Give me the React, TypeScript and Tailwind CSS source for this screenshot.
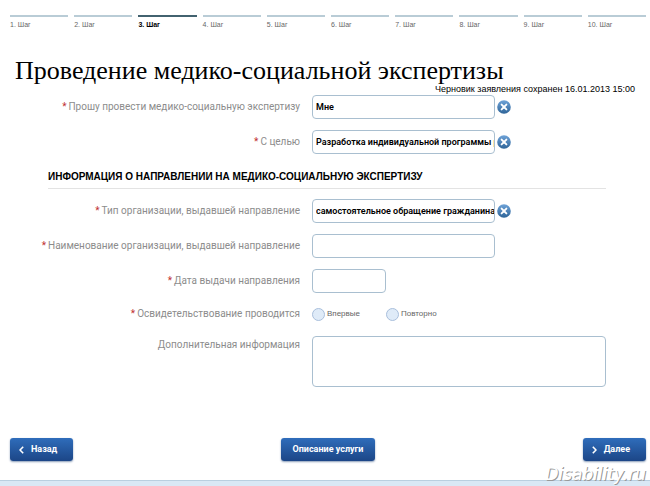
import React, { useState } from 'react';

const STEPS = [1, 2, 3, 4, 5, 6, 7, 8, 9, 10];
const CURRENT_STEP = 3;

const inputClass =
    'h-6 rounded border border-[#a9bfd0] bg-white pl-[3px] font-[Roboto,sans-serif] font-semibold text-[9px] text-black outline-none focus:border-[#4f86b8]';
const buttonClass =
    'flex h-[23px] items-center rounded-[3px] bg-linear-to-b from-[#2f6dbb] to-[#1c4687] font-[Roboto,sans-serif] text-[9px] font-bold text-white shadow-[0_1px_2px_#8a9db8] hover:from-[#3a7aca]';

type RowProps = {
    id: string;
    label: string;
    required?: boolean;
    top?: boolean;
    children: React.ReactNode;
};

const Row: React.FC<RowProps> = ({ id, label, required, top, children }) => (
    <div className={`grid grid-cols-[6fr_7fr] ${top ? 'items-start' : 'items-center'}`}>
        <label htmlFor={id} className={`text-right font-[Roboto,sans-serif] text-[10px] leading-4 text-[#8c8c8c] ${top ? 'pt-px' : ''}`}>
            {required && <span className="mr-[2px] text-[#c03030]">*</span>}
            {label}
        </label>
        <div className="flex items-center pr-11 pl-3">{children}</div>
    </div>
);

const ClearableInput: React.FC<{ id: string; initial: string }> = ({ id, initial }) => {
    const [value, setValue] = useState(initial);

    return (
        <>
            <input id={id} type="text" value={value} onChange={(e) => setValue(e.target.value)} className={`${inputClass} w-[183px]`} />
            <button type="button" aria-label="Очистить" onClick={() => setValue('')} className="ml-[2px]">
                <svg className="h-[14px] w-[14px]" viewBox="0 0 14 14">
                    <defs>
                        <linearGradient id={`${id}-fill`} x1="0" y1="0" x2="0" y2="1">
                            <stop offset="0" stopColor="#6fa3d8" />
                            <stop offset="1" stopColor="#2e6498" />
                        </linearGradient>
                    </defs>
                    <circle cx="7" cy="7" r="6.8" fill={`url(#${id}-fill)`} />
                    <path d="M4.6 4.6l4.8 4.8M9.4 4.6l-4.8 4.8" stroke="#fff" strokeWidth="1.9" strokeLinecap="round" />
                </svg>
            </button>
        </>
    );
};

const Radio: React.FC<{ id: string; label: string }> = ({ id, label }) => (
    <span className="flex items-center gap-[2px]">
        <input
            id={id}
            type="radio"
            name="examination"
            className="h-[13px] w-[13px] appearance-none rounded-full border border-[#a9bfdc] bg-[#dfebf8] checked:border-4 checked:border-[#2f6dbb]"
        />
        <label htmlFor={id} className="text-[8px] leading-4 text-[#666]">{label}</label>
    </span>
);

const App: React.FC = () => (
    <div className="relative flex min-h-screen flex-col bg-white font-['Liberation_Sans',Arial,sans-serif] text-black">
        <ol className="grid grid-cols-10 gap-[6px] pt-[15px] pr-1 pl-[10px]">
            {STEPS.map((step) => (
                <li
                    key={step}
                    className={`border-t-2 pt-1 text-[7px] leading-2 ${
                        step === CURRENT_STEP ? 'border-[#42626f] font-bold text-black' : 'border-[#b9ccd6] text-[#666]'
                    }`}
                >
                    {step}. Шаг
                </li>
            ))}
        </ol>

        <form className="flex flex-col" onSubmit={(e) => e.preventDefault()}>
            <h1 className="mt-[30px] pl-[15px] font-['Liberation_Serif',serif] text-[26px] leading-6 whitespace-nowrap">
                Проведение медико-социальной экспертизы
            </h1>
            <p className="pr-[15px] text-right text-[9px] leading-3">Черновик заявления сохранен 16.01.2013 15:00</p>

            <div className="flex flex-col gap-[11px]">
                <Row id="applicant" label="Прошу провести медико-социальную экспертизу" required>
                    <ClearableInput id="applicant" initial="Мне" />
                </Row>
                <Row id="purpose" label="С целью" required>
                    <ClearableInput id="purpose" initial="Разработка индивидуальной программы реабилитации" />
                </Row>
            </div>

            <h2 className="mt-4 mr-11 ml-12 border-b border-[#e3e3e3] pb-1 text-[10px] leading-[14px] font-bold uppercase">
                Информация о направлении на медико-социальную экспертизу
            </h2>

            <div className="mt-[10px] flex flex-col gap-[11px]">
                <Row id="org-type" label="Тип организации, выдавшей направление" required>
                    <ClearableInput id="org-type" initial="самостоятельное обращение гражданина" />
                </Row>
                <Row id="org-name" label="Наименование организации, выдавшей направление" required>
                    <input id="org-name" type="text" className={`${inputClass} w-[183px]`} />
                </Row>
                <Row id="issue-date" label="Дата выдачи направления" required>
                    <input id="issue-date" type="text" className={`${inputClass} w-[74px]`} />
                </Row>
            </div>

            <div className="mt-[13px] flex flex-col gap-[14px]">
                <Row id="first-time" label="Освидетельствование проводится" required>
                    <div className="flex gap-[26px]">
                        <Radio id="first-time" label="Впервые" />
                        <Radio id="repeated" label="Повторно" />
                    </div>
                </Row>
                <Row id="extra" label="Дополнительная информация" top>
                    <textarea
                        id="extra"
                        className="h-[51px] w-full resize-none rounded border border-[#a9bfd0] bg-white p-1 text-[9px] outline-none focus:border-[#4f86b8]"
                    />
                </Row>
            </div>

            <div className="mt-[51px] flex items-center justify-between pr-1 pb-[19px] pl-[10px]">
                <button type="button" className={`${buttonClass} gap-[7px] pr-4 pl-[9px]`}>
                    <svg className="h-2 w-[5px]" viewBox="0 0 5 8" fill="none" stroke="currentColor" strokeWidth="1.6">
                        <path d="M4.2 .7L1 4l3.2 3.3" />
                    </svg>
                    Назад
                </button>
                <button type="button" className={`${buttonClass} px-3`}>Описание услуги</button>
                <button type="submit" className={`${buttonClass} gap-[7px] pr-4 pl-[9px]`}>
                    <svg className="h-2 w-[5px]" viewBox="0 0 5 8" fill="none" stroke="currentColor" strokeWidth="1.6">
                        <path d="M.8 .7L4 4 .8 7.3" />
                    </svg>
                    Далее
                </button>
            </div>
        </form>

        <div className="min-h-[6px] grow border-t border-[#b9cfe0] bg-[#d9e8f5]" />

        <span className="absolute right-1 bottom-[2px] font-['DejaVu_Sans',sans-serif] text-[17px] leading-5 text-white italic [text-shadow:1px_1px_0_#999]">
            Disability.ru
        </span>
    </div>
);

export default App;
